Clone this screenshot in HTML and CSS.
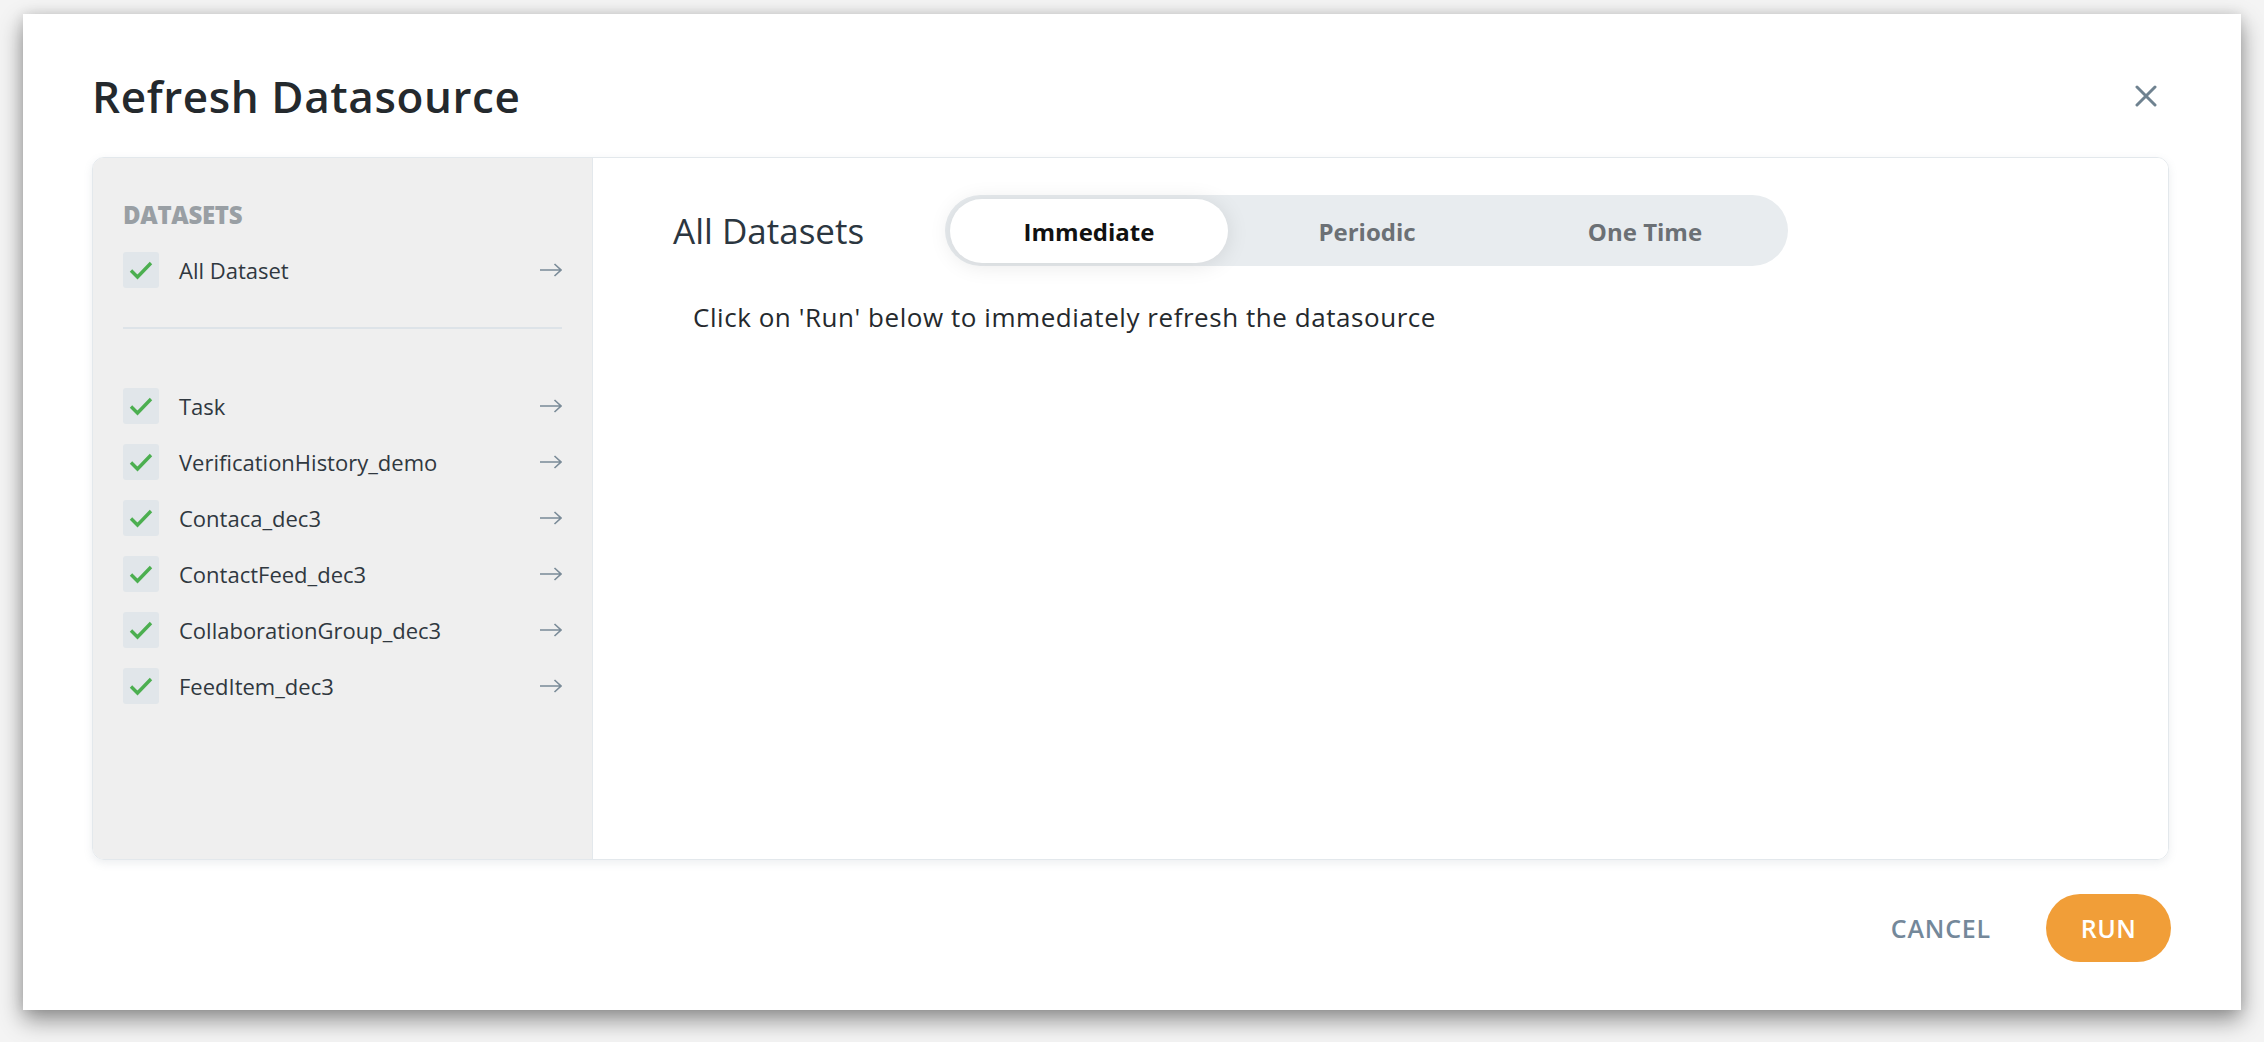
FILE: index.html
```html
<!DOCTYPE html>
<html lang="en">
<head>
<meta charset="utf-8">
<title>Refresh Datasource</title>
<link rel="stylesheet" href="styles.css">
</head>
<body>
<div class="dialog">
  <header class="dialog-header">
    <h1 class="dialog-title">Refresh Datasource</h1>
    <button class="close-btn" aria-label="Close">
      <svg width="22" height="22" viewBox="0 0 22 22"><path d="M2 2 L20 20 M20 2 L2 20" stroke="#6f8290" stroke-width="3" stroke-linecap="round" fill="none"/></svg>
    </button>
  </header>

  <div class="panel">
    <aside class="sidebar">
      <div class="sidebar-title">DATASETS</div>
      <div class="ds-row">
        <span class="check"><svg width="24" height="20" viewBox="0 0 24 20"><path d="M2 10.5 L8.5 17 L22 3" stroke="#4caf50" stroke-width="3.4" fill="none"/></svg></span>
        <span class="ds-name">All Dataset</span>
        <svg class="arrow" width="22" height="14" viewBox="0 0 22 14"><path d="M0 7 H21 M14.5 1 L21 7 L14.5 13" stroke="#7a8b98" stroke-width="1.6" fill="none"/></svg>
      </div>
      <div class="separator"></div>
      <div class="ds-list">
        <div class="ds-row">
          <span class="check"><svg width="24" height="20" viewBox="0 0 24 20"><path d="M2 10.5 L8.5 17 L22 3" stroke="#4caf50" stroke-width="3.4" fill="none"/></svg></span>
          <span class="ds-name">Task</span>
          <svg class="arrow" width="22" height="14" viewBox="0 0 22 14"><path d="M0 7 H21 M14.5 1 L21 7 L14.5 13" stroke="#7a8b98" stroke-width="1.6" fill="none"/></svg>
        </div>
        <div class="ds-row">
          <span class="check"><svg width="24" height="20" viewBox="0 0 24 20"><path d="M2 10.5 L8.5 17 L22 3" stroke="#4caf50" stroke-width="3.4" fill="none"/></svg></span>
          <span class="ds-name">VerificationHistory_demo</span>
          <svg class="arrow" width="22" height="14" viewBox="0 0 22 14"><path d="M0 7 H21 M14.5 1 L21 7 L14.5 13" stroke="#7a8b98" stroke-width="1.6" fill="none"/></svg>
        </div>
        <div class="ds-row">
          <span class="check"><svg width="24" height="20" viewBox="0 0 24 20"><path d="M2 10.5 L8.5 17 L22 3" stroke="#4caf50" stroke-width="3.4" fill="none"/></svg></span>
          <span class="ds-name">Contaca_dec3</span>
          <svg class="arrow" width="22" height="14" viewBox="0 0 22 14"><path d="M0 7 H21 M14.5 1 L21 7 L14.5 13" stroke="#7a8b98" stroke-width="1.6" fill="none"/></svg>
        </div>
        <div class="ds-row">
          <span class="check"><svg width="24" height="20" viewBox="0 0 24 20"><path d="M2 10.5 L8.5 17 L22 3" stroke="#4caf50" stroke-width="3.4" fill="none"/></svg></span>
          <span class="ds-name">ContactFeed_dec3</span>
          <svg class="arrow" width="22" height="14" viewBox="0 0 22 14"><path d="M0 7 H21 M14.5 1 L21 7 L14.5 13" stroke="#7a8b98" stroke-width="1.6" fill="none"/></svg>
        </div>
        <div class="ds-row">
          <span class="check"><svg width="24" height="20" viewBox="0 0 24 20"><path d="M2 10.5 L8.5 17 L22 3" stroke="#4caf50" stroke-width="3.4" fill="none"/></svg></span>
          <span class="ds-name">CollaborationGroup_dec3</span>
          <svg class="arrow" width="22" height="14" viewBox="0 0 22 14"><path d="M0 7 H21 M14.5 1 L21 7 L14.5 13" stroke="#7a8b98" stroke-width="1.6" fill="none"/></svg>
        </div>
        <div class="ds-row">
          <span class="check"><svg width="24" height="20" viewBox="0 0 24 20"><path d="M2 10.5 L8.5 17 L22 3" stroke="#4caf50" stroke-width="3.4" fill="none"/></svg></span>
          <span class="ds-name">FeedItem_dec3</span>
          <svg class="arrow" width="22" height="14" viewBox="0 0 22 14"><path d="M0 7 H21 M14.5 1 L21 7 L14.5 13" stroke="#7a8b98" stroke-width="1.6" fill="none"/></svg>
        </div>
      </div>
    </aside>

    <section class="content">
      <div class="content-head">
        <h2 class="content-title">All Datasets</h2>
        <div class="toggle">
          <span class="toggle-item active">Immediate</span>
          <span class="toggle-item">Periodic</span>
          <span class="toggle-item">One Time</span>
        </div>
      </div>
      <p class="description">Click on 'Run' below to immediately refresh the datasource</p>
    </section>
  </div>

  <footer class="dialog-footer">
    <button class="btn-cancel">CANCEL</button>
    <button class="btn-run">RUN</button>
  </footer>
</div>
</body>
</html>
```

FILE: styles.css
```css
* {
  box-sizing: border-box;
}

html, body {
  margin: 0;
  height: 100%;
}

body {
  background: #f4f4f4;
  font-family: "Open Sans", "Noto Sans", sans-serif;
  padding: 14px 23px 32px 23px;
  overflow: hidden;
}

.dialog {
  width: 2218px;
  height: 996px;
  background: #ffffff;
  box-shadow: 0 10px 22px rgba(0, 0, 0, 0.42), 0 0 12px rgba(0, 0, 0, 0.1);
  padding: 54px 72px 48px 69px;
  display: flex;
  flex-direction: column;
}

.dialog-header {
  display: flex;
  align-items: center;
  justify-content: space-between;
  height: 56px;
}

.dialog-title {
  margin: 0;
  font-size: 44px;
  line-height: 56px;
  font-weight: 600;
  color: #24292d;
  letter-spacing: 0.6px;
}

.close-btn {
  width: 46px;
  height: 46px;
  border: none;
  background: transparent;
  padding: 0;
  display: flex;
  align-items: center;
  justify-content: center;
}

.panel {
  margin-top: 33px;
  height: 703px;
  flex: none;
  border: 1px solid #e3e8ec;
  border-radius: 12px;
  box-shadow: 0 3px 8px rgba(120, 135, 150, 0.14);
  display: flex;
  overflow: hidden;
}

.sidebar {
  width: 500px;
  flex: none;
  background: #efefef;
  border-right: 1px solid #e3e8ec;
  padding: 41px 30px 0 30px;
  display: flex;
  flex-direction: column;
}

.sidebar-title {
  font-size: 24px;
  line-height: 32px;
  font-weight: 800;
  color: #999fa4;
  letter-spacing: -0.3px;
  margin-bottom: 21px;
}

.ds-row {
  display: flex;
  align-items: center;
  height: 36px;
}

.check {
  width: 36px;
  height: 36px;
  border-radius: 3px;
  background: #e1e6ea;
  display: flex;
  align-items: center;
  justify-content: center;
  flex: none;
}

.ds-name {
  flex: 1;
  margin-left: 20px;
  font-size: 22px;
  line-height: 30px;
  color: #30383f;
}

.arrow {
  flex: none;
}

.separator {
  height: 2px;
  background: #dde3e8;
  margin: 39px 0 59px 0;
}

.ds-list {
  display: flex;
  flex-direction: column;
  gap: 20px;
}

.content {
  flex: 1;
  background: #ffffff;
  padding: 37px 80px 0 80px;
}

.content-head {
  display: flex;
  align-items: center;
}

.content-title {
  margin: 0;
  font-size: 35px;
  line-height: 44px;
  font-weight: 400;
  color: #2b3640;
  width: 272px;
  flex: none;
}

.toggle {
  width: 843px;
  height: 71px;
  background: #e8ecef;
  border-radius: 36px;
  padding: 4px 4px 3px 5px;
  display: grid;
  grid-template-columns: 1fr 1fr 1fr;
}

.toggle-item {
  display: flex;
  align-items: center;
  justify-content: center;
  font-size: 24px;
  font-weight: 700;
  color: #6b7075;
  border-radius: 32px;
}

.toggle-item.active {
  background: #ffffff;
  color: #111111;
  box-shadow: 0 2px 22px rgba(0, 0, 0, 0.1);
}

.description {
  margin: 34px 0 0 20px;
  font-size: 26px;
  line-height: 34px;
  letter-spacing: 0.55px;
  color: #25292d;
}

.dialog-footer {
  margin-top: 34px;
  display: flex;
  justify-content: flex-end;
  align-items: center;
  gap: 47px;
}

.btn-cancel {
  border: none;
  background: transparent;
  font-family: "Open Sans", "Noto Sans", sans-serif;
  font-size: 25px;
  font-weight: 600;
  letter-spacing: 0.8px;
  color: #74889a;
  padding: 0 8px;
  height: 68px;
}

.btn-run {
  width: 125px;
  height: 68px;
  border: none;
  border-radius: 34px;
  background: #f19e38;
  color: #ffffff;
  font-family: "Open Sans", "Noto Sans", sans-serif;
  font-size: 25px;
  font-weight: 600;
  letter-spacing: 0.5px;
  margin-right: -2px;
}
```
